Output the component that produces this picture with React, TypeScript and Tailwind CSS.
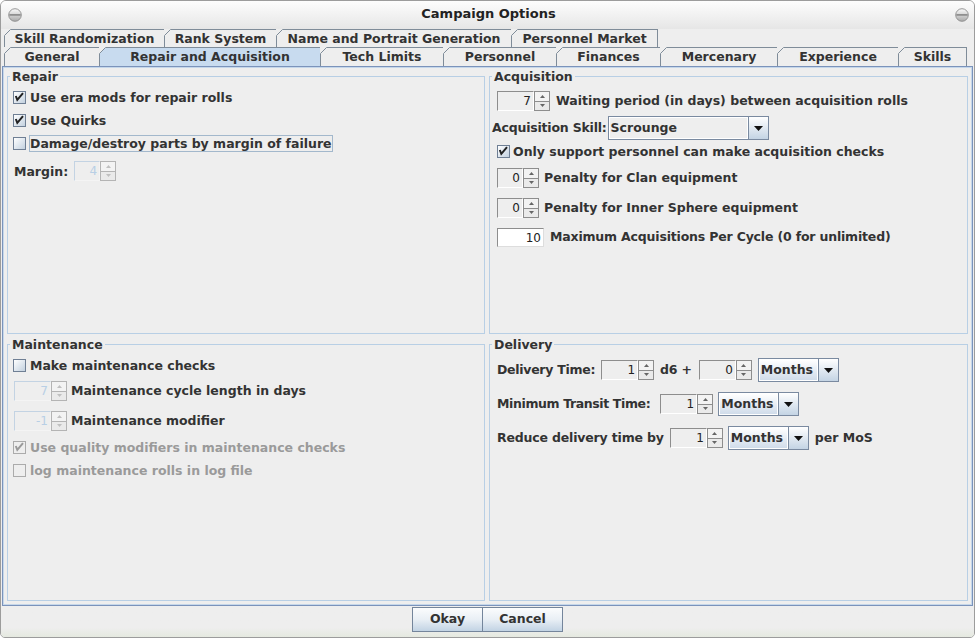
import React from "react";

function CheckBox({ checked, disabled }: { checked?: boolean; disabled?: boolean }) {
  return (
    <span
      className={
        "relative block shrink-0 w-[13px] h-[13px] border " +
        (disabled
          ? "border-[#ababab] bg-[#eeeeee]"
          : "border-[#6f7f94] bg-gradient-to-br from-[#ffffff] to-[#c3d1df]")
      }
    >
      {checked && (
        <svg className="absolute left-0 top-0" width="11" height="11" viewBox="0 0 11 11">
          <polyline
            points="1.8,4 3.3,7.8 9,1.2"
            fill="none"
            stroke={disabled ? "#9a9a9a" : "#222222"}
            strokeWidth="2"
          />
        </svg>
      )}
    </span>
  );
}

function CheckRow({
  label,
  checked,
  disabled,
  focus,
  h,
  gap,
}: {
  label: string;
  checked?: boolean;
  disabled?: boolean;
  focus?: boolean;
  h: string;
  gap: string;
}) {
  return (
    <div className={"flex items-center " + h}>
      <CheckBox checked={checked} disabled={disabled} />
      <span
        className={
          gap +
          " border leading-[15px] whitespace-nowrap " +
          (focus ? "border-[#a3b8cc] " : "border-transparent ") +
          (disabled ? "text-[#9a9a9a]" : "")
        }
      >
        {label}
      </span>
    </div>
  );
}

function Arrow({ up, color }: { up?: boolean; color: string }) {
  return (
    <svg width="5" height="3" viewBox="0 0 5 3">
      <polygon points={up ? "2.5,0 5,3 0,3" : "0,0 5,0 2.5,3"} fill={color} />
    </svg>
  );
}

function Spinner({ value, fieldW, disabled }: { value: string; fieldW: string; disabled?: boolean }) {
  return (
    <div className="flex h-[20px] shrink-0">
      <div
        className={
          fieldW +
          " h-full flex items-center justify-end pr-[2px] font-normal text-[12px] border " +
          (disabled
            ? "border-t-[#c3d3e3] border-l-[#c3d3e3] border-b-[#f4f4f4] border-r-[#f4f4f4] text-[#b8cfe5]"
            : "border-t-[#8d8d8d] border-l-[#8d8d8d] border-b-white border-r-white text-[#222222]")
        }
      >
        {value}
      </div>
      <div
        className={
          "w-[16px] h-full flex flex-col border " + (disabled ? "border-[#b4b4b4]" : "border-[#8d8d8d]")
        }
      >
        <div className="flex-1 flex items-center justify-center bg-[#f3f3f3]">
          <Arrow up color={disabled ? "#c0c0c0" : "#666666"} />
        </div>
        <div
          className={
            "flex-1 flex items-center justify-center bg-[#eaeaea] border-t " +
            (disabled ? "border-[#b4b4b4]" : "border-[#8d8d8d]")
          }
        >
          <Arrow color={disabled ? "#c0c0c0" : "#666666"} />
        </div>
      </div>
    </div>
  );
}

function Combo({ text, w, flat }: { text: string; w: string; flat?: boolean }) {
  return (
    <div className={w + " h-[24px] shrink-0 flex border border-[#7a8aa0]"}>
      <div
        className={
          "flex-1 flex items-center pl-[1px] border border-white " +
          (flat ? "bg-[#eeeeee]" : "bg-gradient-to-b from-[#ffffff] to-[#d0dcea]")
        }
      >
        {text}
      </div>
      <div className="w-[20px] flex items-center justify-center border-l border-[#7a8aa0] bg-gradient-to-b from-[#ffffff] to-[#c4d4e4]">
        <svg width="9" height="5" viewBox="0 0 9 5">
          <polygon points="0,0 9,0 4.5,5" fill="#111111" />
        </svg>
      </div>
    </div>
  );
}

function WinBtn() {
  return (
    <svg width="14" height="14" viewBox="0 0 14 14">
      <defs>
        <linearGradient id="wbg" x1="0" y1="0" x2="0" y2="1">
          <stop offset="0" stopColor="#fbfbfb" />
          <stop offset="1" stopColor="#a9a9a9" />
        </linearGradient>
      </defs>
      <circle cx="7" cy="7" r="6.3" fill="url(#wbg)" stroke="#8c8c8c" strokeWidth="0.9" />
      <rect x="1.3" y="6" width="11.4" height="1.8" fill="#8f8f8f" />
    </svg>
  );
}

function Tab({ label, w, selected, last }: { label: string; w: string; selected?: boolean; last?: boolean }) {
  return (
    <div
      className={
        "relative " +
        w +
        " h-full flex items-center justify-center border-t border-l border-[#7f8c99] " +
        (last ? "border-r " : "") +
        (selected ? "bg-[#c8dbef]" : "")
      }
    >
      <svg className="absolute left-[-1px] top-[-1px]" width="7" height="7" viewBox="0 0 7 7">
        <polygon points="0,0 7,0 0,7" fill="#eeeeee" />
        <line x1="0.5" y1="6.5" x2="6.5" y2="0.5" stroke="#7f8c99" strokeWidth="1" />
      </svg>
      <span className="leading-[15px] whitespace-nowrap -mt-[1px]">{label}</span>
    </div>
  );
}

function Legend({ children }: { children: React.ReactNode }) {
  return <legend className="ml-[2px] px-[2px] leading-[15px]">{children}</legend>;
}

export default function App() {
  return (
    <div className="w-[975px] h-[638px] flex flex-col bg-[#eeeeee] border border-[#9c9c9c] rounded-t-[6px] rounded-b-[5px] overflow-hidden font-['DejaVu_Sans',sans-serif] font-bold text-[12.5px] text-[#333333]">
      {/* title bar */}
      <div className="h-[28px] shrink-0 flex items-center justify-between pl-[7px] pr-[5px] bg-gradient-to-b from-[#fdfdfd] to-[#e6e6e6]">
        <WinBtn />
        <span className="text-[13px] text-[#222222] leading-[16px] -mt-[2px]">Campaign Options</span>
        <WinBtn />
      </div>

      {/* tabs */}
      <div className="shrink-0 flex flex-col pl-[3px]">
        <div className="flex h-[18px]">
          <Tab label="Skill Randomization" w="w-[160px]" />
          <Tab label="Rank System" w="w-[112px]" />
          <Tab label="Name and Portrait Generation" w="w-[235px]" />
          <Tab label="Personnel Market" w="w-[147px]" last />
        </div>
        <div className="flex h-[19px]">
          <Tab label="General" w="w-[95px]" />
          <Tab label="Repair and Acquisition" w="w-[221px]" selected />
          <Tab label="Tech Limits" w="w-[123px]" />
          <Tab label="Personnel" w="w-[113px]" />
          <Tab label="Finances" w="w-[104px]" />
          <Tab label="Mercenary" w="w-[117px]" />
          <Tab label="Experience" w="w-[121px]" />
          <Tab label="Skills" w="w-[69px]" last />
        </div>
      </div>

      {/* content pane */}
      <div className="mx-[1px] shrink-0 border border-[#7b93bb]">
        <div className="border border-[#c5d7ea] pt-[1px] px-[3px] pb-[3px]">
          <div className="grid grid-cols-[478px_479px] grid-rows-[265px_264px] gap-x-[4px] gap-y-[3px]">
            {/* Repair */}
            <fieldset className="border border-[#b8cfe5] min-w-0">
              <Legend>Repair</Legend>
              <div className="flex flex-col pl-[5px] pt-[2px]">
                <CheckRow h="h-[23px]" gap="ml-[3px]" checked label="Use era mods for repair rolls" />
                <CheckRow h="h-[23px]" gap="ml-[3px]" checked label="Use Quirks" />
                <CheckRow h="h-[23px]" gap="ml-[3px]" focus label="Damage/destroy parts by margin of failure" />
                <div className="mt-[6px] flex items-center h-[20px] gap-[6px] pl-[1px]">
                  <span className="leading-[15px]">Margin:</span>
                  <Spinner value="4" fieldW="w-[26px]" disabled />
                </div>
              </div>
            </fieldset>

            {/* Acquisition */}
            <fieldset className="border border-[#b8cfe5] min-w-0">
              <Legend>Acquisition</Legend>
              <div className="flex flex-col">
                <div className="ml-[7px] mt-[7px] flex items-center gap-[6px] h-[20px]">
                  <Spinner value="7" fieldW="w-[37px]" />
                  <span className="whitespace-nowrap">Waiting period (in days) between acquisition rolls</span>
                </div>
                <div className="ml-[2px] mt-[5px] flex items-center gap-[1px] h-[24px]">
                  <span className="whitespace-nowrap tracking-[-0.2px]">Acquisition Skill:</span>
                  <Combo text="Scrounge" w="w-[161px]" flat />
                </div>
                <div className="ml-[7px] mt-[3px]">
                  <CheckRow h="h-[17px]" gap="ml-[2px]" checked label="Only support personnel can make acquisition checks" />
                </div>
                <div className="ml-[7px] mt-[8px] flex items-center gap-[5px] h-[20px]">
                  <Spinner value="0" fieldW="w-[26px]" />
                  <span className="whitespace-nowrap">Penalty for Clan equipment</span>
                </div>
                <div className="ml-[7px] mt-[10px] flex items-center gap-[5px] h-[20px]">
                  <Spinner value="0" fieldW="w-[26px]" />
                  <span className="whitespace-nowrap">Penalty for Inner Sphere equipment</span>
                </div>
                <div className="ml-[7px] mt-[10px] flex items-center gap-[6px] h-[19px]">
                  <div className="w-[47px] h-full flex items-center justify-end pr-[2px] bg-white font-normal text-[12px] text-[#222222] border border-t-[#8d8d8d] border-l-[#8d8d8d] border-b-[#dddddd] border-r-[#dddddd]">
                    10
                  </div>
                  <span className="whitespace-nowrap tracking-[-0.18px]">Maximum Acquisitions Per Cycle (0 for unlimited)</span>
                </div>
              </div>
            </fieldset>

            {/* Maintenance */}
            <fieldset className="border border-[#b8cfe5] min-w-0">
              <Legend>Maintenance</Legend>
              <div className="flex flex-col">
                <div className="ml-[5px] mt-[5px]">
                  <CheckRow h="h-[17px]" gap="ml-[3px]" label="Make maintenance checks" />
                </div>
                <div className="ml-[6px] mt-[7px] flex items-center gap-[4px] h-[20px]">
                  <Spinner value="7" fieldW="w-[37px]" disabled />
                  <span className="whitespace-nowrap">Maintenance cycle length in days</span>
                </div>
                <div className="ml-[6px] mt-[10px] flex items-center gap-[4px] h-[20px]">
                  <Spinner value="-1" fieldW="w-[37px]" disabled />
                  <span className="whitespace-nowrap">Maintenance modifier</span>
                </div>
                <div className="ml-[5px] mt-[8px]">
                  <CheckRow h="h-[17px]" gap="ml-[3px]" checked disabled label="Use quality modifiers in maintenance checks" />
                </div>
                <div className="ml-[5px] mt-[6px]">
                  <CheckRow h="h-[17px]" gap="ml-[3px]" disabled label="log maintenance rolls in log file" />
                </div>
              </div>
            </fieldset>

            {/* Delivery */}
            <fieldset className="border border-[#b8cfe5] min-w-0">
              <Legend>Delivery</Legend>
              <div className="flex flex-col pl-[7px]">
                <div className="mt-[6px] flex items-center h-[24px]">
                  <span className="whitespace-nowrap tracking-[-0.28px]">Delivery Time:</span>
                  <div className="ml-[6px]">
                    <Spinner value="1" fieldW="w-[37px]" />
                  </div>
                  <span className="ml-[6px] whitespace-nowrap tracking-[-0.2px]">d6 +</span>
                  <div className="ml-[7px]">
                    <Spinner value="0" fieldW="w-[37px]" />
                  </div>
                  <div className="ml-[6px]">
                    <Combo text="Months" w="w-[81px]" />
                  </div>
                </div>
                <div className="mt-[10px] flex items-center h-[24px]">
                  <span className="whitespace-nowrap tracking-[-0.38px]">Minimum Transit Time:</span>
                  <div className="ml-[10px]">
                    <Spinner value="1" fieldW="w-[37px]" />
                  </div>
                  <div className="ml-[5px]">
                    <Combo text="Months" w="w-[81px]" />
                  </div>
                </div>
                <div className="mt-[10px] flex items-center h-[24px]">
                  <span className="whitespace-nowrap tracking-[-0.17px]">Reduce delivery time by</span>
                  <div className="ml-[6px]">
                    <Spinner value="1" fieldW="w-[37px]" />
                  </div>
                  <div className="ml-[5px]">
                    <Combo text="Months" w="w-[81px]" />
                  </div>
                  <span className="ml-[6px] whitespace-nowrap">per MoS</span>
                </div>
              </div>
            </fieldset>
          </div>
        </div>
      </div>

      {/* buttons */}
      <div className="flex-1 flex justify-center items-start pt-[1px] bg-gradient-to-b from-[#eeeeee] from-70% to-[#e5e9e0]">
        <button className="w-[71px] h-[25px] flex items-center justify-center border border-[#74859b] bg-gradient-to-b from-[#fbfcfd] via-[#e9eff5] to-[#c2d3e4] font-bold text-[#333333]">
          Okay
        </button>
        <button className="-ml-px w-[81px] h-[25px] flex items-center justify-center border border-[#74859b] bg-gradient-to-b from-[#fbfcfd] via-[#e9eff5] to-[#c2d3e4] font-bold text-[#333333]">
          Cancel
        </button>
      </div>
    </div>
  );
}
